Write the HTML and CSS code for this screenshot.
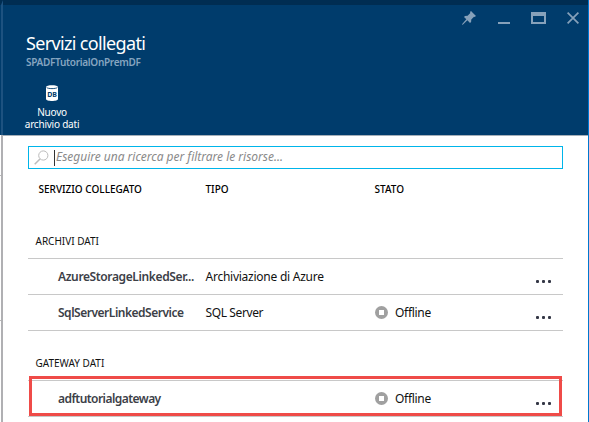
FILE: index.html
```html
<!DOCTYPE html>
<html lang="it">
<head>
<meta charset="utf-8">
<title>Servizi collegati</title>
<link rel="stylesheet" href="styles.css">
</head>
<body>
<div class="edge"><div class="edge-head"></div><div class="edge-body"><i></i><i></i></div></div>
<main class="blade">
  <header class="head">
    <div class="controls">
      <svg width="14" height="14" viewBox="0 0 14 14"><path fill="currentColor" d="M9 0 14 5 12.6 6 12 5.8 9.3 8.5 9.1 11 8 12 5.4 9.2 1 13.5 0 14 .4 12.8 4.3 8.2 2 6 3 5 5.6 4.8 8.3 2 8 1Z"/></svg>
      <svg width="12" height="14" viewBox="0 0 12 14"><path fill="currentColor" d="M0 11h12v2H0z"/></svg>
      <svg width="15" height="14" viewBox="0 0 15 14"><path fill="currentColor" fill-rule="evenodd" d="M0 1h15v12H0zM2 5v6h11V5z"/></svg>
      <svg width="12" height="14" viewBox="0 0 12 14"><path fill="none" stroke="currentColor" stroke-width="1.7" d="M.6 1.6 11.4 12.4M11.4 1.6.6 12.4"/></svg>
    </div>
    <h1>Servizi collegati</h1>
    <p class="sub">SPADFTutorialOnPremDF</p>
    <div class="command">
      <svg width="12" height="16" viewBox="0 0 12 16"><path fill="#fff" d="M0 2.2C0-.4 12-.4 12 2.2V14c0 2.6-12 2.6-12 0Z"/><path fill="none" stroke="#003c6c" stroke-width=".9" d="M.6 2.4c1 1.6 9.8 1.6 10.800 0"/><text class="db" x="6" y="11.500" text-anchor="middle">DB</text></svg>
      <span>Nuovo<br>archivio dati</span>
    </div>
  </header>
  <section class="content">
    <div class="search">
      <svg width="15" height="15" viewBox="0 0 15 15"><circle cx="9.300" cy="5.500" r="4.600" fill="none" stroke="#bbb"/><path stroke="#bbb" stroke-width="1.500" d="M6 9 .7 14.200"/></svg>
      <span class="caret"></span>
      <span class="placeholder">Eseguire una ricerca per filtrare le risorse...</span>
    </div>
    <div class="columns"><span class="service">SERVIZIO COLLEGATO</span><span>TIPO</span><span>STATO</span></div>
    <h2 class="first">ARCHIVI DATI</h2>
    <div class="row"><b class="storage">AzureStorageLinkedSer...</b><span class="type">Archiviazione di Azure</span><span></span><span class="more"><i></i><i></i><i></i></span></div>
    <div class="row"><b class="sql">SqlServerLinkedService</b><span class="type sql-type">SQL Server</span><span class="status"><i></i>Offline</span><span class="more"><i></i><i></i><i></i></span></div>
    <h2 class="second">GATEWAY DATI</h2>
    <div class="row selected"><b class="gateway">adftutorialgateway</b><span></span><span class="status"><i></i>Offline</span><span class="more"><i></i><i></i><i></i></span></div>
    <div class="end"></div>
  </section>
</main>
</body>
</html>
```
FILE: styles.css
```css
*, *::after { box-sizing: border-box; }
body { margin: 0; width: 589px; height: 422px; overflow: hidden; display: flex; background: #fff; color: #111; font: 12px/16px "Noto Sans", "Open Sans", sans-serif; }
h1, h2, p { margin: 0; font-weight: 400; }
svg { display: block; }
.edge { width: 3px; height: 422px; flex: none; }
.edge-head { height: 135px; background: #003c6c; border-right: 2px solid #1d5280; border-top: 5px solid #002d52; }
.edge-body { height: 287px; border-right: 2px solid #b0b0b3; padding-top: 40px; }
.edge-body i { display: block; height: 1px; background: #b9b9b9; }
.edge-body i + i { margin-top: 144px; }
.blade { flex: 1; height: 422px; border-right: 1px solid #0078d0; }
.head { height: 136px; background: #003c6c; border-top: 5px solid #002d52; border-bottom: 1px solid #a5afb8; padding-left: 23px; }
.controls { display: flex; justify-content: flex-end; height: 26px; padding: 6px 9px 0 0; color: #86a1ba; }
.controls svg + svg { margin-left: 21px; }
.controls svg:nth-child(2) { margin-left: 22px; }
h1 { color: #fff; font-size: 18px; line-height: 24px; letter-spacing: -.65px; }
.sub { color: #86a5c0; font-size: 10px; font-weight: 600; line-height: 14px; letter-spacing: -.3px; }
.command { width: 52px; margin-top: 16px; display: flex; flex-direction: column; align-items: center; white-space: nowrap; text-align: center; color: #fff; font-size: 10px; line-height: 12px; letter-spacing: -.22px; }
.command svg { margin-bottom: 5px; }
.db { fill: #003c6c; font: 700 7px "Noto Sans", sans-serif; }
.content { padding: 10px 25px 0; }
.search { height: 23px; border: 1px solid #00b5ea; display: flex; align-items: center; padding-left: 5px; }
.caret { width: 1px; height: 16px; background: #333; margin-left: 5px; }
.placeholder { color: #8a8a8a; font-style: italic; letter-spacing: -.02px; margin-top: -1px; padding-left: 1px; }
.columns, .row { display: grid; grid-template-columns: 177.5px 169px 1fr 27px; }
.columns { margin-top: 12px; font-size: 10px; font-weight: 500; color: #000; }
.columns .service { padding-left: 10.500px; }
h2 { font-size: 10px; line-height: 16px; padding-left: 7.500px; }
.first { margin-top: 36px; height: 25px; }
.second { border-top: 1px solid #c8c8c8; padding-top: 24px; height: 50px; }
.row { height: 36px; border-top: 1px solid #c8c8c8; line-height: 36px; white-space: nowrap; color: #111; }
.row b { padding-left: 30px; font-weight: 600; color: #3c4047; }
.storage { letter-spacing: -.38px; }
.sql { letter-spacing: -.48px; }
.gateway { letter-spacing: -.55px; }
.type { letter-spacing: -.25px; }
.sql-type { letter-spacing: -.38px; }
.status { display: flex; align-items: center; gap: 7px; padding-left: .5px; letter-spacing: -.3px; }
.status i { width: 13px; height: 13px; margin-bottom: 2px; border-radius: 50%; background: linear-gradient(#fff, #fff) center / 5px 5px no-repeat #a0a0a0; }
.more { display: flex; gap: 3px; padding-top: 21px; }
.more i { width: 3px; height: 3px; background: #343746; border-radius: 1px; }
.selected { position: relative; }
.selected::after { content: ""; position: absolute; left: 1px; right: 1px; top: -5px; height: 40px; border: 3px solid #ef4b48; }
.end { border-top: 1px solid #c8c8c8; }
```
